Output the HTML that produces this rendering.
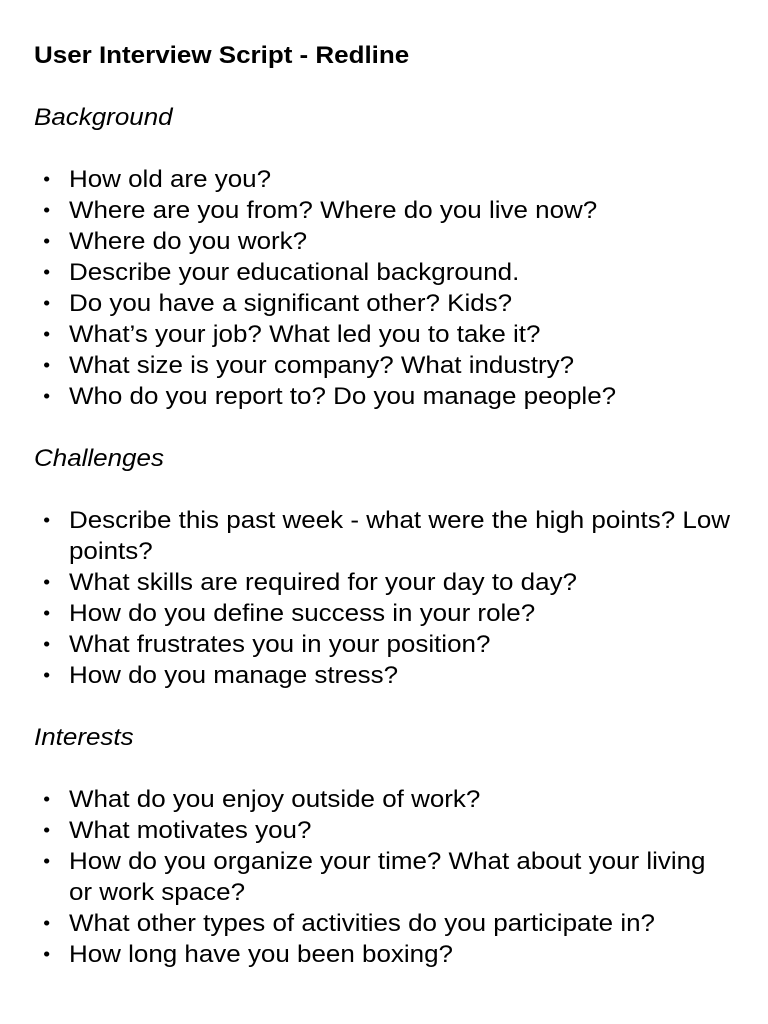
<!DOCTYPE html>
<html><head><meta charset="utf-8"><style>
html,body{margin:0;padding:0;background:#fff;}
body{width:768px;height:1024px;overflow:hidden;font-family:"Liberation Sans",Arial,sans-serif;font-size:24px;color:#000;}
.c{position:absolute;left:34px;top:40px;line-height:31px;white-space:nowrap;transform:scaleX(1.082);transform-origin:0 0;}
.t{font-weight:bold;}
.h{font-style:italic;}
.b{height:31px;}
.li{position:relative;padding-left:32.3px;}
.li:before{content:"•";position:absolute;left:8.5px;font-size:18px;}
</style></head><body><div class="c">
<div class="t">User Interview Script - Redline</div>
<div class="b"></div>
<div class="h">Background</div>
<div class="b"></div>
<div class="li">How old are you?</div>
<div class="li">Where are you from? Where do you live now?</div>
<div class="li">Where do you work?</div>
<div class="li">Describe your educational background.</div>
<div class="li">Do you have a significant other? Kids?</div>
<div class="li">What’s your job? What led you to take it?</div>
<div class="li">What size is your company? What industry?</div>
<div class="li">Who do you report to? Do you manage people?</div>
<div class="b"></div>
<div class="h">Challenges</div>
<div class="b"></div>
<div class="li">Describe this past week - what were the high points? Low<br>points?</div>
<div class="li">What skills are required for your day to day?</div>
<div class="li">How do you define success in your role?</div>
<div class="li">What frustrates you in your position?</div>
<div class="li">How do you manage stress?</div>
<div class="b"></div>
<div class="h">Interests</div>
<div class="b"></div>
<div class="li">What do you enjoy outside of work?</div>
<div class="li">What motivates you?</div>
<div class="li">How do you organize your time? What about your living<br>or work space?</div>
<div class="li">What other types of activities do you participate in?</div>
<div class="li">How long have you been boxing?</div>
</div></body></html>
